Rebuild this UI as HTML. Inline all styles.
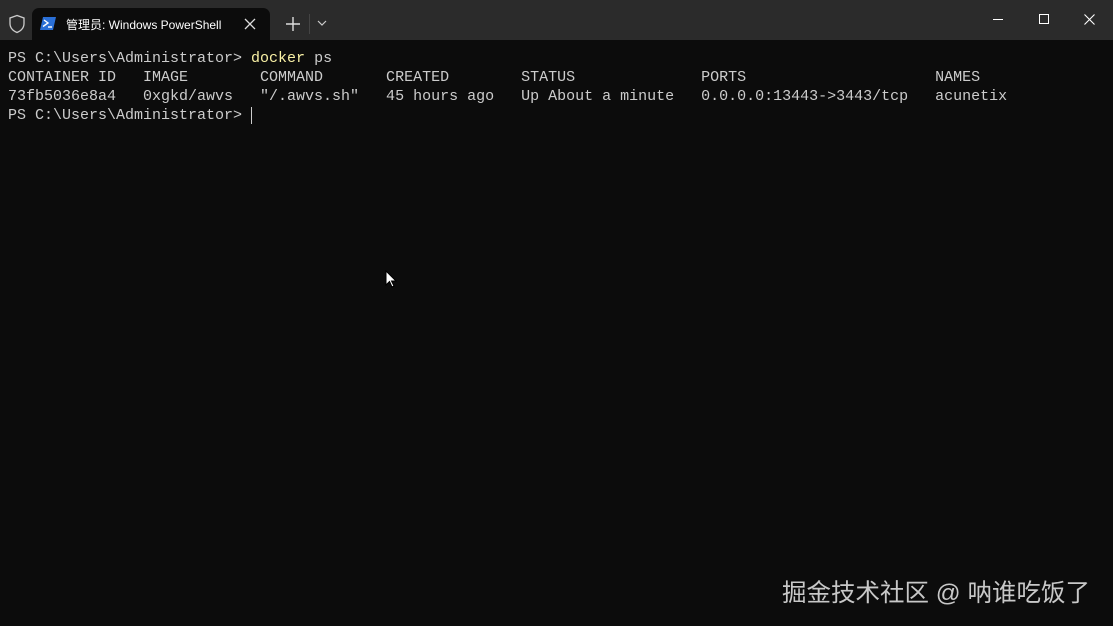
<!DOCTYPE html>
<html><head><meta charset="utf-8"><style>
html,body{margin:0;padding:0;width:1113px;height:626px;overflow:hidden;background:#0c0c0c;}
.bar{position:absolute;left:0;top:0;width:1113px;height:40px;background:#2b2b2b;}
.tab{position:absolute;left:32px;top:8px;width:238px;height:32px;background:#0c0c0c;border-radius:7px 7px 0 0;}
.tt{position:absolute;left:66px;top:16px;font:12px "Liberation Sans","Noto Sans CJK SC",sans-serif;color:#fff;white-space:nowrap;}
pre{position:absolute;left:8px;top:49px;margin:0;font:15px/19px "Liberation Mono",monospace;color:#cccccc;}
.y{color:#f9f1a5}
.wm{position:absolute;left:782px;top:574px;font:24.5px "Liberation Sans","Noto Sans CJK SC",sans-serif;color:#c8c8c8;white-space:nowrap;}
</style></head><body>
<div class="bar"></div>
<svg style="position:absolute;left:8px;top:14px" width="18" height="20" viewBox="0 0 18 20"><path d="M9 1.5L2 4v5.5c0 4.5 3.5 7.5 7 9 3.5-1.5 7-4.5 7-9V4z" fill="none" stroke="#ccc" stroke-width="1.3"/></svg>
<div class="tab"></div>
<svg style="position:absolute;left:40px;top:17px" width="16" height="13" viewBox="0 0 16 13"><path d="M3 0h13l-3 13H0z" fill="#2a6fd6"/><path d="M4 3l4 3-5 3.5" fill="none" stroke="#fff" stroke-width="1.4"/><path d="M8 10h4" stroke="#fff" stroke-width="1.4"/></svg>
<div class="tt">管理员: Windows PowerShell</div>
<svg style="position:absolute;left:244px;top:18px" width="12" height="12"><path d="M1 1L11 11M11 1L1 11" stroke="#ddd" stroke-width="1.3"/></svg>
<svg style="position:absolute;left:286px;top:17px" width="14" height="14"><path d="M7 0v14M0 7h14" stroke="#ddd" stroke-width="1.4"/></svg>
<div style="position:absolute;left:309px;top:14px;width:1px;height:20px;background:#444"></div>
<svg style="position:absolute;left:317px;top:20px" width="10" height="6"><path d="M1 1l4 4 4-4" fill="none" stroke="#ccc" stroke-width="1.2"/></svg>
<div style="position:absolute;left:993px;top:19px;width:10px;height:1px;background:#fff"></div>
<div style="position:absolute;left:1039px;top:14px;width:8px;height:8px;border:1px solid #fff"></div>
<svg style="position:absolute;left:1084px;top:14px" width="11" height="11"><path d="M0.5 0.5L10.5 10.5M10.5 0.5L0.5 10.5" stroke="#fff" stroke-width="1.1"/></svg>
<pre>PS C:\Users\Administrator&gt; <span class="y">docker</span> ps
CONTAINER ID   IMAGE        COMMAND       CREATED        STATUS              PORTS                     NAMES
73fb5036e8a4   0xgkd/awvs   "/.awvs.sh"   45 hours ago   Up About a minute   0.0.0.0:13443-&gt;3443/tcp   acunetix
PS C:\Users\Administrator&gt; </pre>
<div style="position:absolute;left:251px;top:107px;width:1px;height:17px;background:#ccc"></div>
<svg style="position:absolute;left:385px;top:270px" width="12" height="19" viewBox="0 0 12 19"><path d="M1 1v14l3.5-3.5 2.5 5.5 2-1-2.5-5H11z" fill="#fff" stroke="#000" stroke-width="1"/></svg>
<div class="wm">掘金技术社区 @ 呐谁吃饭了</div>
</body></html>
